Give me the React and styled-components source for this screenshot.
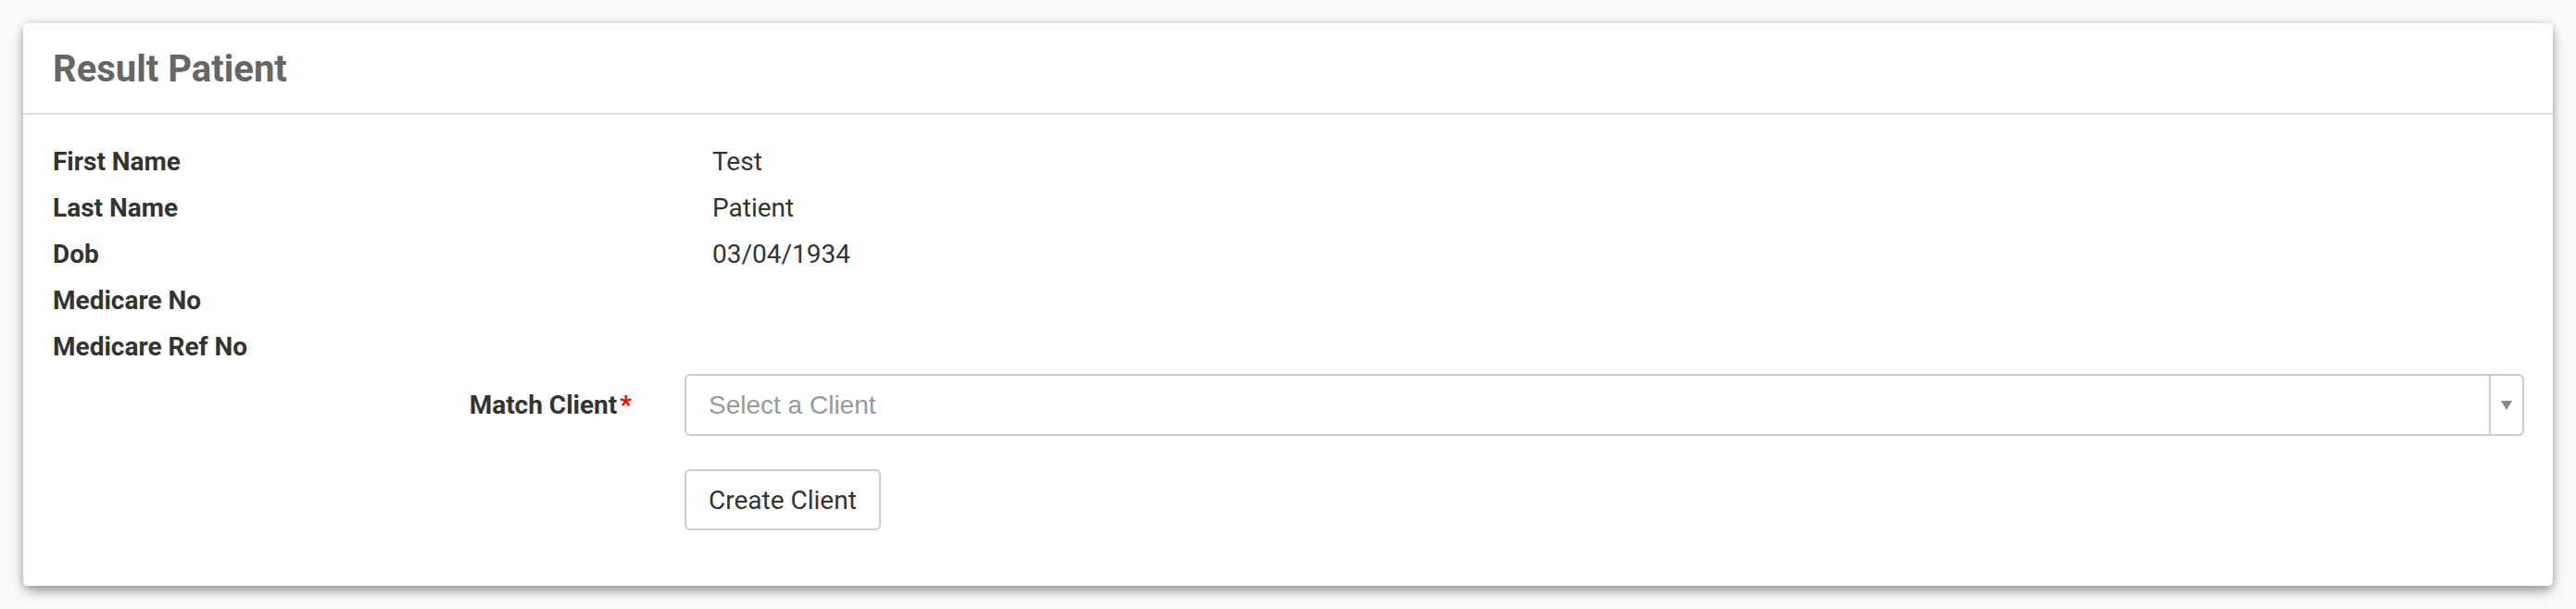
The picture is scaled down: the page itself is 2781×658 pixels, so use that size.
import React from 'react'
import styled, { createGlobalStyle } from 'styled-components'

const GlobalStyle = createGlobalStyle`
  html, body {
    margin: 0;
    padding: 0;
    background: #fafafa;
    font-family: Roboto, 'Liberation Sans', sans-serif;
  }
`

const Page = styled.div`
  padding: 25px;
  box-sizing: border-box;
  width: 100%;
  height: 658px;
`

const Card = styled.div`
  background: #fff;
  border-radius: 5px;
  box-shadow: 0 6px 14px -2px rgba(0, 0, 0, 0.45), 0 0 8px rgba(0, 0, 0, 0.12);
  overflow: hidden;
`

const CardHeader = styled.div`
  padding: 30px 32px 27px;
  border-bottom: 2px solid #dddddd;
`

const Title = styled.h3`
  margin: 0;
  font-size: 40px;
  line-height: 40px;
  font-weight: 700;
  color: #666;
`

const CardBody = styled.div`
  padding: 26px 31px 60px 32px;
`

const InfoRow = styled.div`
  display: grid;
  grid-template-columns: 712px 1fr;
  height: 50px;
  line-height: 50px;
  font-size: 28px;
  color: #333;
`

const Label = styled.div`
  font-weight: 700;
`

const Value = styled.div`
  font-weight: 400;
`

const FormRow = styled.div`
  display: grid;
  grid-template-columns: 625px 1fr;
  column-gap: 57px;
  margin-top: ${(p) => p.$top}px;
`

const FormLabel = styled.label`
  text-align: right;
  font-size: 28px;
  line-height: 67px;
  font-weight: 700;
  color: #333;
`

const Required = styled.span`
  color: #ff0000;
  margin-left: 3px;
`

const Select = styled.div`
  display: flex;
  height: 67px;
  box-sizing: border-box;
  border: 2px solid #cccccc;
  border-radius: 6px;
  background: #fff;
`

const Placeholder = styled.span`
  flex: 1;
  padding-left: 24px;
  font-family: 'Liberation Sans', Arial, sans-serif;
  font-size: 28px;
  line-height: 63px;
  color: #999;
`

const Arrow = styled.span`
  width: 34px;
  border-left: 2px solid #cccccc;
  display: flex;
  align-items: center;
  justify-content: center;
`

const Button = styled.button`
  justify-self: start;
  height: 66px;
  padding: 0 24px;
  border: 2px solid #cccccc;
  border-radius: 6px;
  background: #fff;
  font-family: Roboto, sans-serif;
  font-size: 28px;
  color: #333;
  cursor: pointer;
`

const rows = [
  ['First Name', 'Test'],
  ['Last Name', 'Patient'],
  ['Dob', '03/04/1934'],
  ['Medicare No', ''],
  ['Medicare Ref No', '']
]

export default function App() {
  return (
    <>
      <GlobalStyle />
      <Page>
        <Card>
          <CardHeader>
            <Title>Result Patient</Title>
          </CardHeader>
          <CardBody>
            {rows.map(([label, value]) => (
              <InfoRow key={label}>
                <Label>{label}</Label>
                <Value>{value}</Value>
              </InfoRow>
            ))}
            <FormRow $top={4}>
              <FormLabel>
                Match Client<Required>*</Required>
              </FormLabel>
              <Select>
                <Placeholder>Select a Client</Placeholder>
                <Arrow>
                  <svg width="12" height="10" viewBox="0 0 12 10">
                    <path d="M0 0 L12 0 L6 10 Z" fill="#888" />
                  </svg>
                </Arrow>
              </Select>
            </FormRow>
            <FormRow $top={36}>
              <div />
              <Button>Create Client</Button>
            </FormRow>
          </CardBody>
        </Card>
      </Page>
    </>
  )
}
